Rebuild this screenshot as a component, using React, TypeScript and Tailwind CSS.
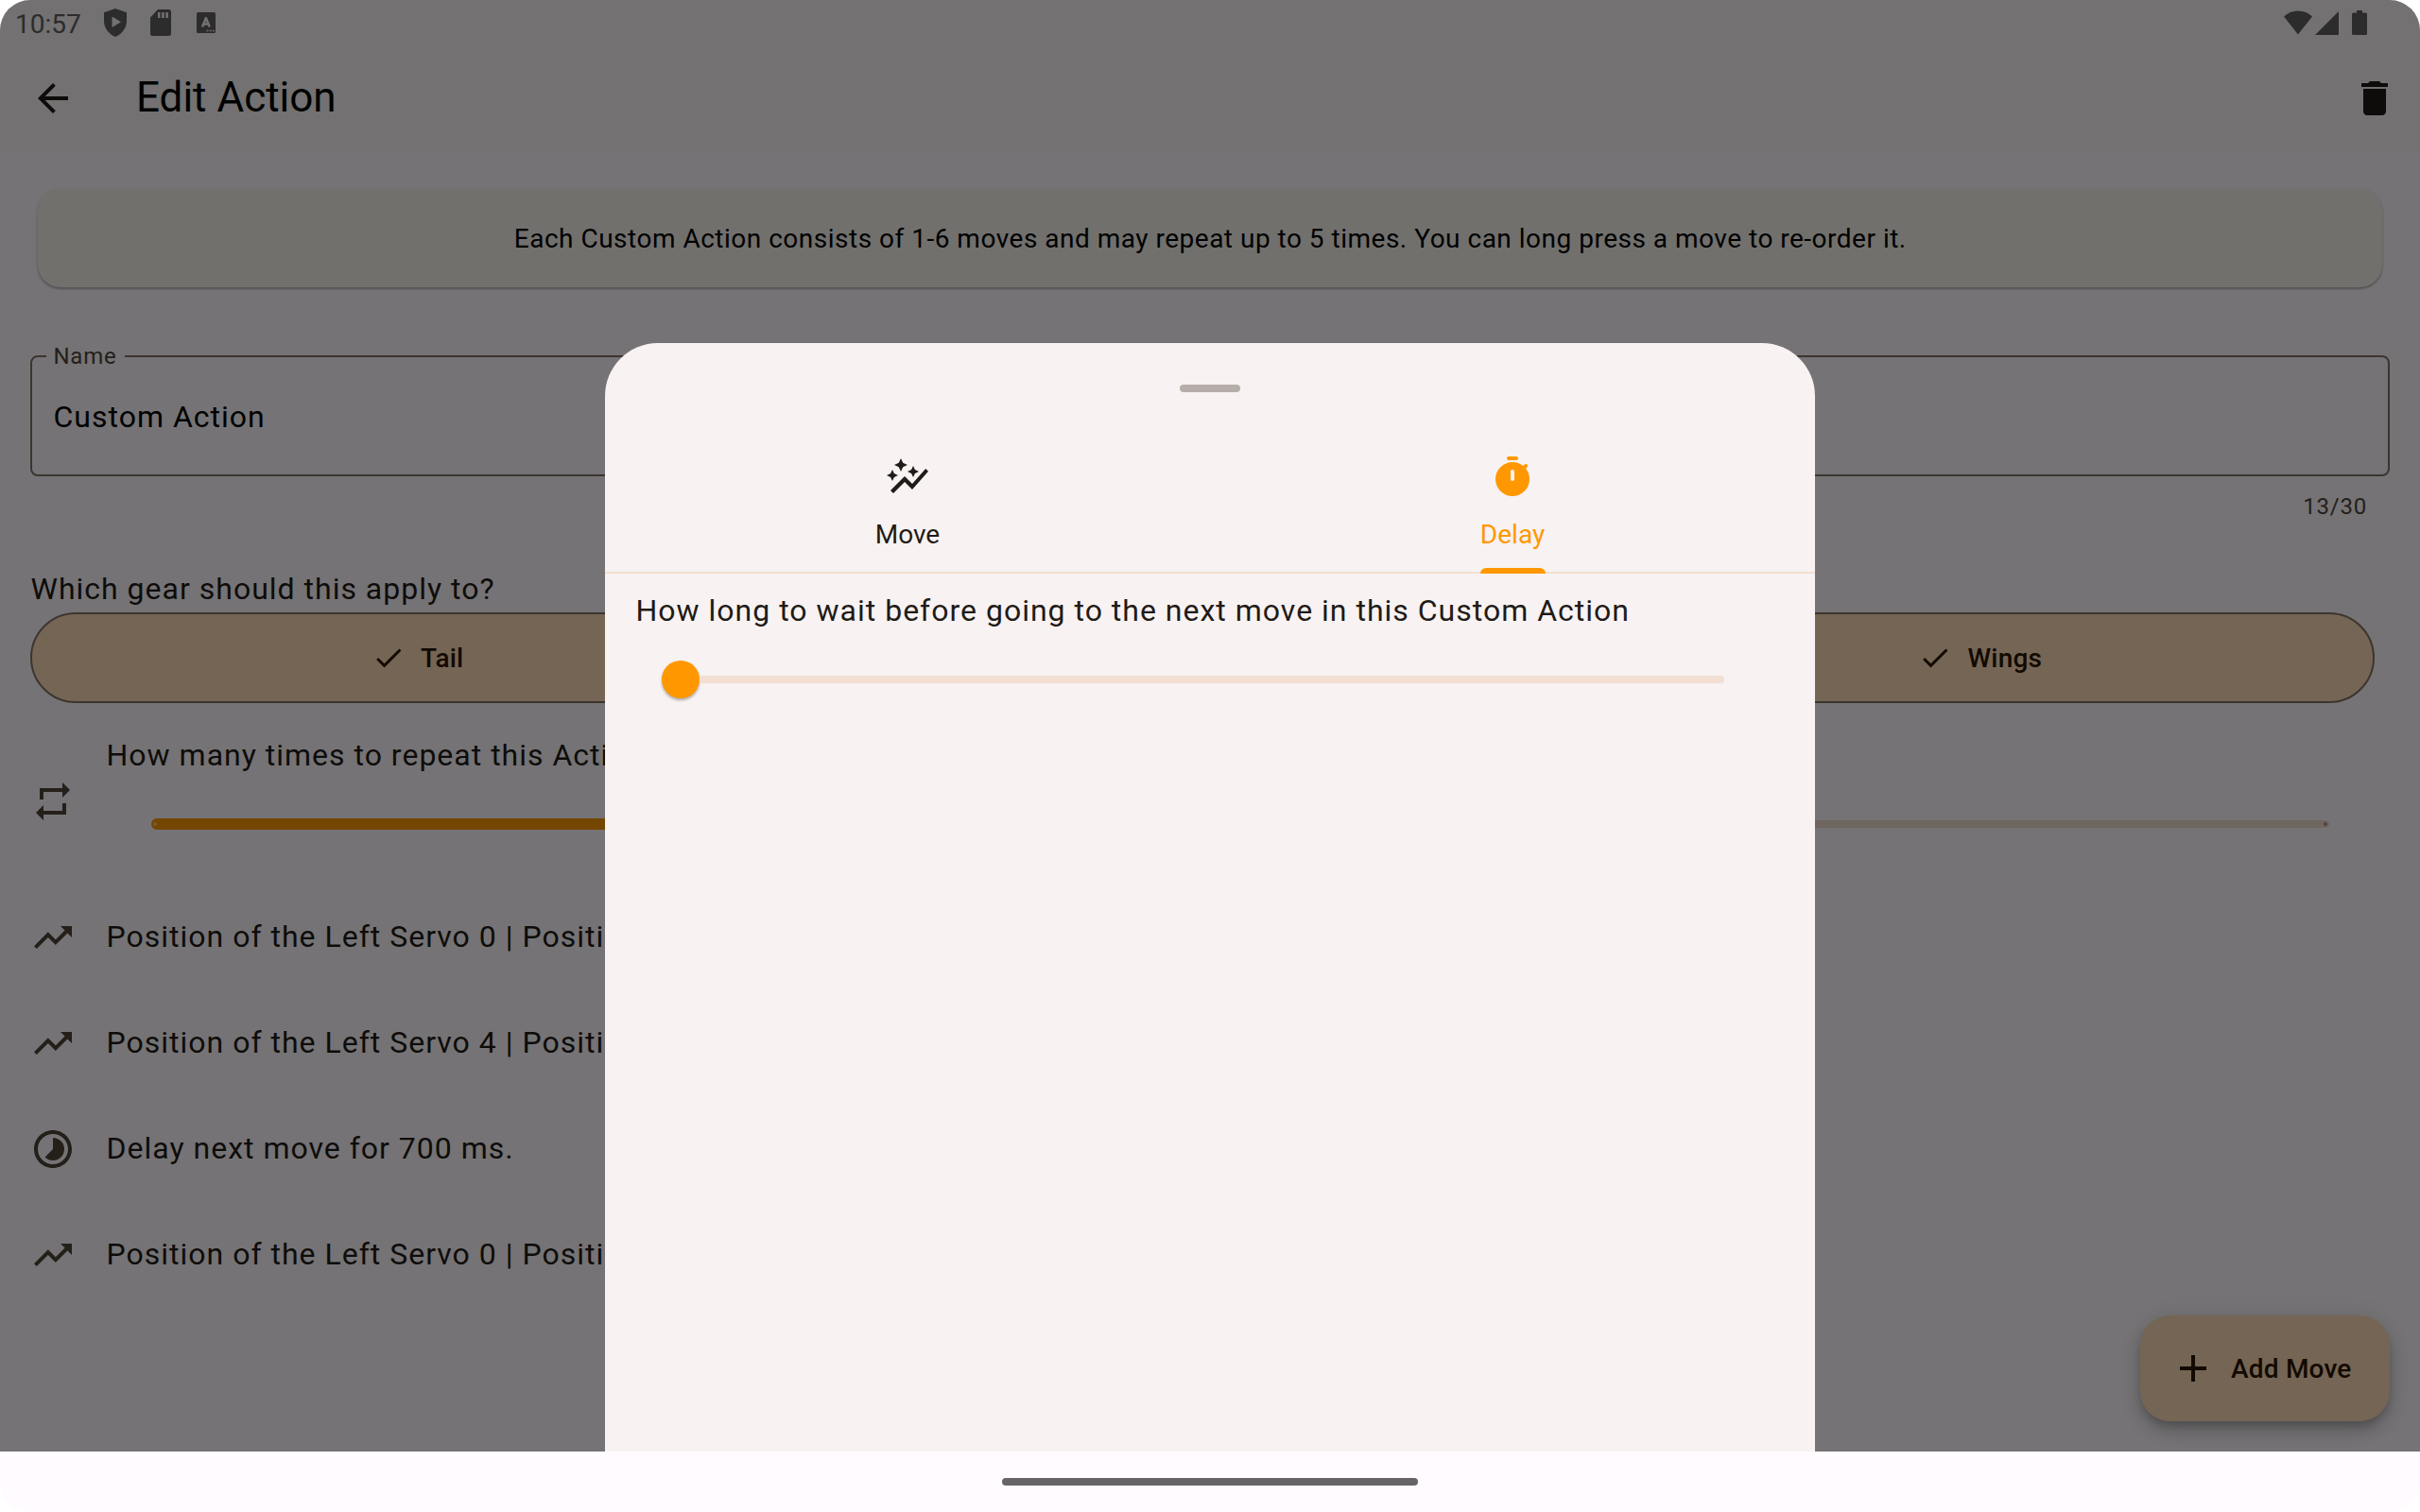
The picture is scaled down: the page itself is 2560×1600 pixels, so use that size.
import type { ReactNode } from "react";
import {
  MdAdd,
  MdArrowBack,
  MdAutoGraph,
  MdCheck,
  MdDelete,
  MdTimelapse,
  MdTrendingUp,
} from "react-icons/md";

function StatusBar() {
  return (
    <div className="flex h-12 items-center justify-between pr-14 pl-4 text-[#626162]">
      <div className="flex h-12 items-center">
        <span className="w-[94px] pt-[3px] text-[28px] leading-[50px]">10:57</span>
        <svg className="h-[30px] w-6" viewBox="0 0 24 30" fill="currentColor">
          <path
            fillRule="evenodd"
            d="M12 0 24 4.2V13c0 7.600-5 14-12 17C5 27 0 20.600 0 13V4.200ZM8.500 8.500v11.500L18 14.200Z"
          />
        </svg>
        <svg className="ml-[25px] h-7 w-[22px]" viewBox="0 0 22 28" fill="currentColor">
          <path
            fillRule="evenodd"
            d="M8 0h11.500A2.500 2.500 0 0 1 22 2.500v23a2.500 2.500 0 0 1-2.500 2.500h-17A2.500 2.500 0 0 1 0 25.500V8.500ZM8 3v6h2.500V3Zm4.200 0v6h2.500V3Zm4.200 0v6h2.500V3Z"
          />
        </svg>
        <svg className="ml-[27px] h-[22px] w-5" viewBox="0 0 20 22">
          <rect width="20" height="22" rx="1.500" fill="currentColor" />
          <path
            d="M6 15.500 9.900 6 13.800 15.500M7.300 12.500h5.200"
            fill="none"
            stroke="#faf6f7"
            strokeWidth="2.400"
            strokeLinejoin="round"
          />
          <path d="M10.500 19.500h8.500" stroke="#faf6f7" strokeWidth="1.700" strokeDasharray="2 1.200" />
        </svg>
      </div>
      <div className="flex h-12 items-center">
        <svg className="h-[26px] w-[30px]" viewBox="0 0 30 26" fill="currentColor">
          <path d="M0 6.500C4 2.500 9 .5 15 .5s11 2 15 6L15 25.500Z" />
        </svg>
        <svg className="ml-[3px] h-[26px] w-[25px]" viewBox="0 0 25 26" fill="currentColor">
          <path d="M25 1v25H0Z" />
        </svg>
        <svg className="ml-[14px] h-[26px] w-4" viewBox="0 0 16 26" fill="currentColor">
          <path d="M5 0h6v2.500h3.500A1.500 1.500 0 0 1 16 4v20.500a1.500 1.500 0 0 1-1.500 1.500h-13A1.500 1.500 0 0 1 0 24.500V4a1.500 1.500 0 0 1 1.500-1.500H5Z" />
        </svg>
      </div>
    </div>
  );
}

function RepeatIcon() {
  return (
    <svg className="size-12" viewBox="0 0 24 24" fill="currentColor">
      <path d="M7 7h10v3l4-4-4-4v3H5v6h2V7zm10 10H7v-3l-4 4 4 4v-3h12v-6h-2v4z" />
    </svg>
  );
}

function TimerIcon() {
  return (
    <svg className="size-12" viewBox="0 0 24 24" fill="currentColor">
      <path d="M10 3h4c.55 0 1-.45 1-1s-.45-1-1-1h-4c-.55 0-1 .45-1 1s.45 1 1 1z" />
      <path d="M19.030 7.390l.75-.75c.38-.38.39-1.010 0-1.400l-.01-.01c-.39-.39-1.010-.38-1.400 0l-.75.75C16.070 4.740 14.120 4 12 4c-4.800 0-8.880 3.960-9 8.760C2.870 17.840 6.940 22 12 22c4.980 0 9-4.030 9-9 0-2.120-.74-4.070-1.970-5.610zM13 13c0 .55-.45 1-1 1s-1-.45-1-1V9c0-.55.45-1 1-1s1 .45 1 1v4z" />
    </svg>
  );
}

function Segment({ label, className }: { label: string; className: string }) {
  return (
    <div className={`flex items-center justify-center gap-4 ${className}`}>
      <MdCheck className="size-9" />
      <span className="pt-0.5 text-[28px] leading-10 font-medium tracking-[0.2px]">{label}</span>
    </div>
  );
}

function MoveRow({ icon, children }: { icon: ReactNode; children: ReactNode }) {
  return (
    <li className="flex h-28 items-center gap-8 px-8">
      <span className="text-[#51453a]">{icon}</span>
      <span className="pb-0.5 pl-[0.5px] text-[32px] leading-[46px] tracking-[1px] whitespace-nowrap">
        {children}
      </span>
    </li>
  );
}

function EditScreen() {
  return (
    <div className="flex h-[1536px] flex-col bg-[#fffbff] text-[#1f1b16]">
      <header className="h-40 shrink-0 bg-[#faf6f7]">
        <StatusBar />
        <div className="flex h-28 items-center px-8">
          <MdArrowBack className="size-12" />
          <h1 className="ml-16 flex-1 pb-0.5 text-[44px] leading-[56px] text-black">Edit Action</h1>
          <MdDelete className="-mr-2 size-12" />
        </div>
      </header>

      <div className="mx-10 mt-10 flex h-[104px] shrink-0 items-center justify-center rounded-3xl bg-[#f6f4ee] pt-0.5 pl-[0.5px] text-[28px] tracking-[0.5px] text-black shadow-[0_2px_2px_rgba(0,0,0,0.22),0_1px_4px_rgba(0,0,0,0.12)]">
        Each Custom Action consists of 1-6 moves and may repeat up to 5 times. You can long press a
        move to re-order it.
      </div>

      <div className="relative mx-8 mt-[72px] flex h-32 shrink-0 items-center rounded-lg border-2 border-[#837468] px-[22px]">
        <span className="absolute -top-[18px] left-[15px] bg-[#fffbff] pr-[8.500px] pl-[7.500px] text-2xl leading-[34px] tracking-[0.75px] text-[#51453a]">
          Name
        </span>
        <span className="pt-0.5 pl-[0.5px] text-[32px] tracking-[1px] text-black">Custom Action</span>
      </div>
      <div className="mt-4 mr-14 h-8 shrink-0 text-right text-2xl leading-8 tracking-[0.8px] text-[#51453a]">
        13/30
      </div>

      <div className="mt-[47px] ml-8 h-[49px] shrink-0 pl-[0.5px] text-[32px] leading-[48px] tracking-[1px]">
        Which gear should this apply to?
      </div>
      <div className="mr-12 ml-8 grid h-24 shrink-0 grid-cols-3 rounded-full border-2 border-[#837468] bg-[#ffddb9] text-[#2b1700]">
        <Segment label="Tail" className="col-start-1 pr-2.5" />
        <Segment label="Wings" className="col-start-3 pr-[5px]" />
      </div>

      <div className="mt-8 flex h-36 shrink-0 items-center gap-8 pr-12 pl-8">
        <span className="text-[#51453a]">
          <RepeatIcon />
        </span>
        <div className="flex-1 self-start">
          <div className="pl-[0.5px] text-[32px] leading-[46px] tracking-[1px]">
            How many times to repeat this Action
          </div>
          <div className="mt-11 mr-12 ml-12 flex h-3 items-center">
            <div className="flex h-3 w-1/2 items-center rounded-l-full bg-[#ff9800] pl-0.5">
              <span className="size-1 rounded-full bg-[#ffc26b]" />
            </div>
            <div className="flex h-2 w-1/2 items-center justify-end rounded-r-full bg-[#f2dfd1] pr-0.5">
              <span className="size-1 rounded-full bg-[#a8998c]" />
            </div>
          </div>
        </div>
      </div>

      <ul className="mt-4 flex flex-col">
        <MoveRow icon={<MdTrendingUp className="size-12" />}>
          Position of the Left Servo 0 | Position
        </MoveRow>
        <MoveRow icon={<MdTrendingUp className="size-12" />}>
          Position of the Left Servo 4 | Position
        </MoveRow>
        <MoveRow icon={<MdTimelapse className="size-12" />}>Delay next move for 700 ms.</MoveRow>
        <MoveRow icon={<MdTrendingUp className="size-12" />}>
          Position of the Left Servo 0 | Position
        </MoveRow>
      </ul>

      <button className="absolute top-[1392px] right-8 flex h-28 w-[264px] items-center gap-4 rounded-[32px] bg-[#ffddb9] pl-8 text-[#2b1700] shadow-[0_6px_10px_-2px_rgba(0,0,0,0.2),0_12px_20px_rgba(0,0,0,0.14),0_2px_30px_rgba(0,0,0,0.1)]">
        <MdAdd className="size-12" />
        <span className="pt-0.5 text-[28px] leading-10 font-medium tracking-[0.2px]">Add Move</span>
      </button>
    </div>
  );
}

function DelaySheet() {
  return (
    <section className="absolute top-[363px] left-[640px] flex h-[1173px] w-[1280px] flex-col rounded-t-[56px] bg-[#f8f2f2] text-[#1f1b16]">
      <div className="flex h-24 items-center justify-center">
        <div className="h-2 w-16 rounded-full bg-[#b5ada8]" />
      </div>
      <div className="grid h-[148px] grid-cols-2 border-b-2 border-[#f2dfd1]">
        <div className="flex flex-col items-center pt-[22px]">
          <MdAutoGraph className="size-12" />
          <span className="mt-[17px] text-[28px] leading-10">Move</span>
        </div>
        <div className="flex flex-col items-center pt-[22px] text-[#ff9800]">
          <TimerIcon />
          <span className="mt-[17px] text-[28px] leading-10">Delay</span>
          <span className="mt-[15px] h-1.5 w-[69px] shrink-0 rounded-t-[6px] bg-[#ff9800]" />
        </div>
      </div>
      <div className="mt-4 px-8 pl-[32.5px] text-[32px] leading-[46px] tracking-[1px]">
        How long to wait before going to the next move in this Custom Action
      </div>
      <div className="mt-[30px] mr-24 ml-[60px] flex h-10 items-center">
        <div className="size-10 shrink-0 rounded-full bg-[#ff9800] shadow-[0_2px_3px_rgba(0,0,0,0.3)]" />
        <div className="h-2 flex-1 rounded-r-full bg-[#f2dfd1]" />
      </div>
    </section>
  );
}

export default function App() {
  return (
    <div className="h-[1600px] w-[2560px] overflow-hidden bg-white">
      <div
        className="relative h-full w-full overflow-hidden rounded-[32px] bg-[#fffbff]"
        style={{ fontFamily: "Roboto, sans-serif" }}
      >
        <EditScreen />
        <div className="absolute inset-x-0 top-0 h-[1536px] bg-black/54" />
        <DelaySheet />
        <nav className="flex h-16 items-center justify-center bg-[#fffbff]">
          <div className="h-2 w-[440px] rounded-full bg-[#666466]" />
        </nav>
      </div>
    </div>
  );
}
